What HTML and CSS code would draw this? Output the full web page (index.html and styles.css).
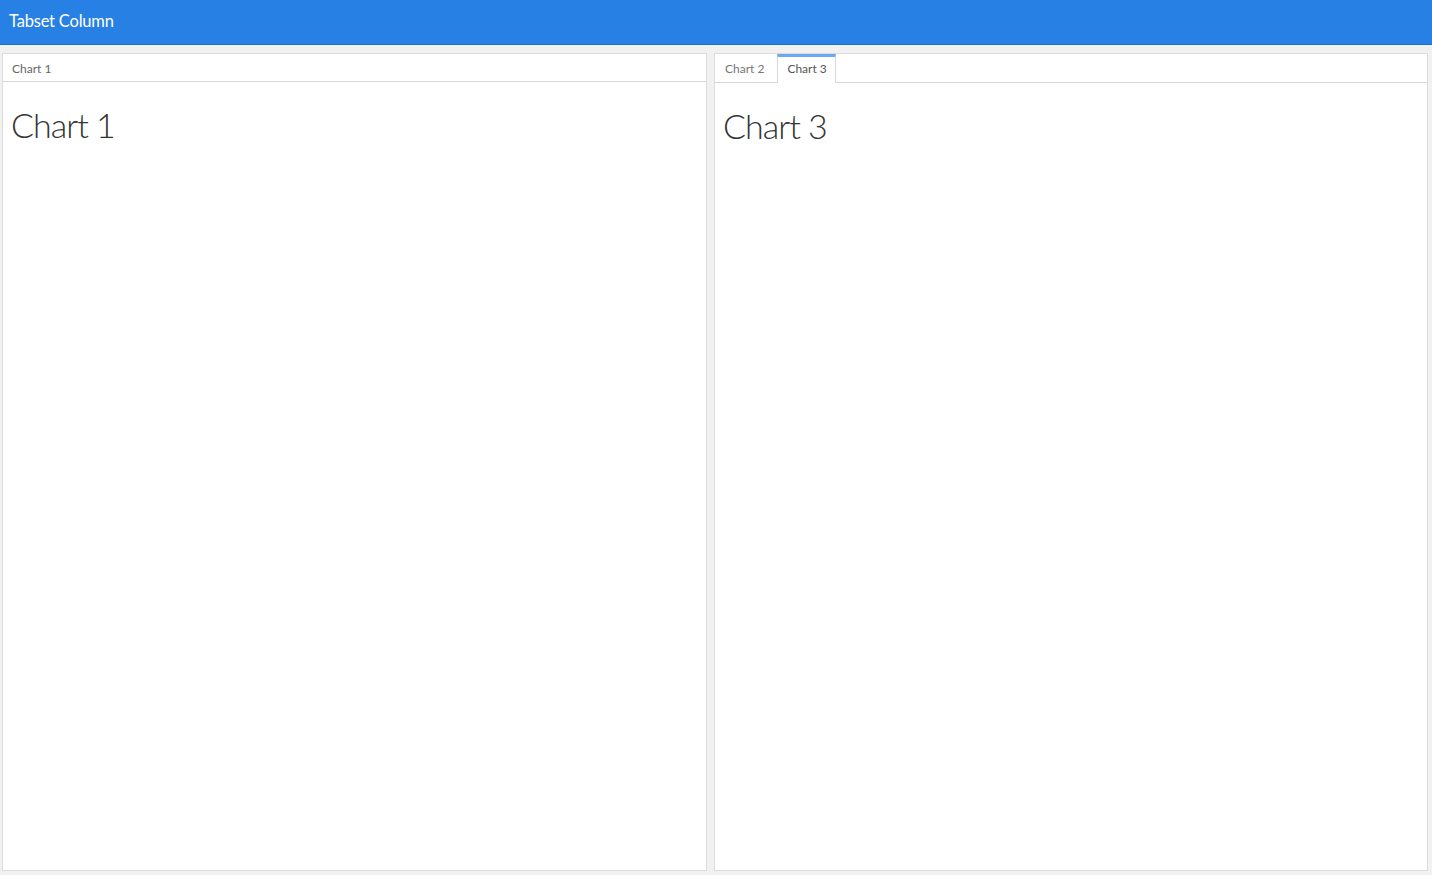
FILE: index.html
```html
<!DOCTYPE html>
<html>
<head>
<meta charset="utf-8">
<link rel="stylesheet" href="styles.css">
</head>
<body>
<header class="navbar"><span class="brand">Tabset Column</span></header>
<main class="dashboard">
  <section class="card">
    <div class="card-head plain"><span class="head-title">Chart 1</span></div>
    <div class="card-body"><h1 class="chart-title">Chart 1</h1></div>
  </section>
  <section class="card">
    <div class="card-head tabs">
      <span class="tab">Chart 2</span>
      <span class="tab active">Chart 3</span>
    </div>
    <div class="card-body"><h1 class="chart-title">Chart 3</h1></div>
  </section>
</main>
</body>
</html>
```
FILE: styles.css
```css
* { box-sizing: border-box; }
html, body { height: 100%; }
body {
  margin: 0;
  background: #f1f1f1;
  font-family: Lato, "Open Sans", "Liberation Sans", sans-serif;
  display: flex;
  flex-direction: column;
  overflow: hidden;
}
.navbar {
  height: 45px;
  flex: none;
  background: #2780e3;
  border-bottom: 1px solid #1f6fc8;
  display: flex;
  align-items: center;
  padding: 0 9px 2px;
}
.brand {
  color: #fff;
  font-size: 16.5px;
  letter-spacing: -0.2px;
}
.dashboard {
  flex: 1;
  display: flex;
  gap: 7px;
  padding: 8px 4px 4px 2px;
  min-height: 0;
}
.card {
  flex: 1;
  background: #fff;
  border: 1px solid #dcdcdc;
  display: flex;
  flex-direction: column;
}
.card:first-child { flex: 0 0 705px; }
.card-head {
  flex: none;
  border-bottom: 1px solid #d7d7d7;
  display: flex;
  font-size: 12px;
  color: #666;
}
.card-head.plain {
  height: 28px;
  align-items: center;
  padding: 1px 9px 0;
}
.card-head.tabs {
  height: 29px;
  align-items: stretch;
}
.tab {
  display: flex;
  align-items: center;
  padding: 0 10px 4px;
  margin-right: 3px;
  color: #777;
  margin-bottom: -1px;
  border-top: 3px solid transparent;
}
.tab.active {
  border-top-color: #6aa9ef;
  border-left: 1px solid #d7d7d7;
  border-right: 1px solid #d7d7d7;
  background: #fff;
  color: #555;
  padding: 0 8px 4px 9px;
}
.card-body {
  flex: 1;
  padding: 0 8px;
}
.chart-title {
  margin: 23px 0 0;
  font-size: 34px;
  font-weight: 300;
  color: #333;
  line-height: 40px;
  letter-spacing: -1px;
}
```
